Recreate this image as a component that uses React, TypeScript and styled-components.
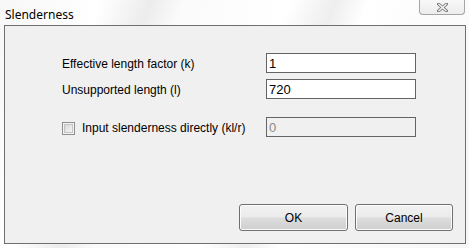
import {FC} from "react"
import styled, {createGlobalStyle} from "styled-components"

const GlobalStyle = createGlobalStyle`
  html, body {
    margin: 0;
    padding: 0;
    background: #ffffff;
  }
`

const Window = styled.div`
  width: 469px;
  height: 248px;
  display: flex;
  flex-direction: column;
  box-sizing: border-box;
  padding: 0 3px 4px 4px;
  font-family: "Liberation Sans", Arial, sans-serif;
  background: linear-gradient(110deg, #f7f7f7 0%, #ffffff 18%, #ececec 27%, #fbfbfb 33%, #ffffff 52%, #eeeeee 60%, #ffffff 66%, #f6f6f6 100%);
`

const TitleBar = styled.div`
  height: 25px;
  display: flex;
  align-items: flex-start;
  justify-content: space-between;
`

const Title = styled.span`
  font-size: 12px;
  color: #000;
  margin: 6px 0 0 1px;
  font-family: "Noto Sans", "Liberation Sans", sans-serif;
`

const CloseButton = styled.div`
  width: 46px;
  height: 15px;
  box-sizing: border-box;
  border: 1px solid #a5a5a5;
  border-top: none;
  border-radius: 0 0 4px 4px;
  background: linear-gradient(#f8f8f8, #ececec);
  display: flex;
  align-items: center;
  justify-content: center;
  margin-right: 1px;
`

const Panel = styled.div`
  flex: 1;
  display: flex;
  flex-direction: column;
  border: 1px solid #6f6f6f;
  background: #f0f0f0;
  padding: 27px 12px 12px 57px;
`

const Form = styled.div`
  display: grid;
  grid-template-columns: 204px 150px;
  row-gap: 6px;
`

const Label = styled.label<{$gapAbove?: boolean}>`
  font-size: 12px;
  color: #000;
  display: flex;
  align-items: center;
  gap: 7px;
  margin-top: ${p => (p.$gapAbove ? "12px" : "0")};
  padding-top: 2px;
`

const Field = styled.input<{$gapAbove?: boolean}>`
  box-sizing: border-box;
  height: 20px;
  width: 150px;
  margin: ${p => (p.$gapAbove ? "12px" : "0")} 0 0 0;
  padding: 0 2px;
  border: 1px solid #646464;
  background: #fff;
  font-family: "Liberation Sans", Arial, sans-serif;
  font-size: 13px;
  color: #000;
  outline: none;

  &:disabled {
    background: #f0f0f0;
    color: #8a8a8a;
  }
`

const CheckBox = styled.span`
  width: 13px;
  height: 13px;
  box-sizing: border-box;
  border: 1px solid #8f8f8f;
  padding: 1px;
  background: #f4f4f4;
  display: inline-block;

  &::after {
    content: "";
    display: block;
    width: 9px;
    height: 9px;
    box-sizing: border-box;
    border: 1px solid #c4c4c4;
    background: linear-gradient(135deg, #d6d6d6, #f7f7f7);
  }
`

const ButtonRow = styled.div`
  margin-top: auto;
  display: flex;
  justify-content: flex-end;
  gap: 7px;
`

const Button = styled.button<{$width: number}>`
  width: ${p => p.$width}px;
  height: 27px;
  box-sizing: border-box;
  border: 1px solid #707070;
  border-radius: 3px;
  background: linear-gradient(#f2f2f2 0%, #ebebeb 48%, #dddddd 52%, #cfcfcf 100%);
  box-shadow: inset 0 0 0 1px #fcfcfc;
  font-family: "Liberation Sans", Arial, sans-serif;
  font-size: 12px;
  color: #000;
  padding: 0;
`

const CloseIcon: FC = () => (
	<svg width="11" height="9" viewBox="0 0 11 9">
		<path d="M1.5 1 L9.5 8 M9.5 1 L1.5 8" stroke="#7a7a7a" strokeWidth="3" strokeLinecap="square"/>
		<path d="M1.5 1 L9.5 8 M9.5 1 L1.5 8" stroke="#ffffff" strokeWidth="1.2"/>
	</svg>
)

const App: FC = () => {
	return <>
		<GlobalStyle/>
		<Window>
			<TitleBar>
				<Title>Slenderness</Title>
				<CloseButton><CloseIcon/></CloseButton>
			</TitleBar>
			<Panel>
				<Form>
					<Label>Effective length factor (k)</Label>
					<Field defaultValue="1"/>
					<Label>Unsupported length (l)</Label>
					<Field defaultValue="720"/>
					<Label $gapAbove><CheckBox/>Input slenderness directly (kl/r)</Label>
					<Field $gapAbove defaultValue="0" disabled/>
				</Form>
				<ButtonRow>
					<Button $width={109}>OK</Button>
					<Button $width={98}>Cancel</Button>
				</ButtonRow>
			</Panel>
		</Window>
	</>
}
export default App
